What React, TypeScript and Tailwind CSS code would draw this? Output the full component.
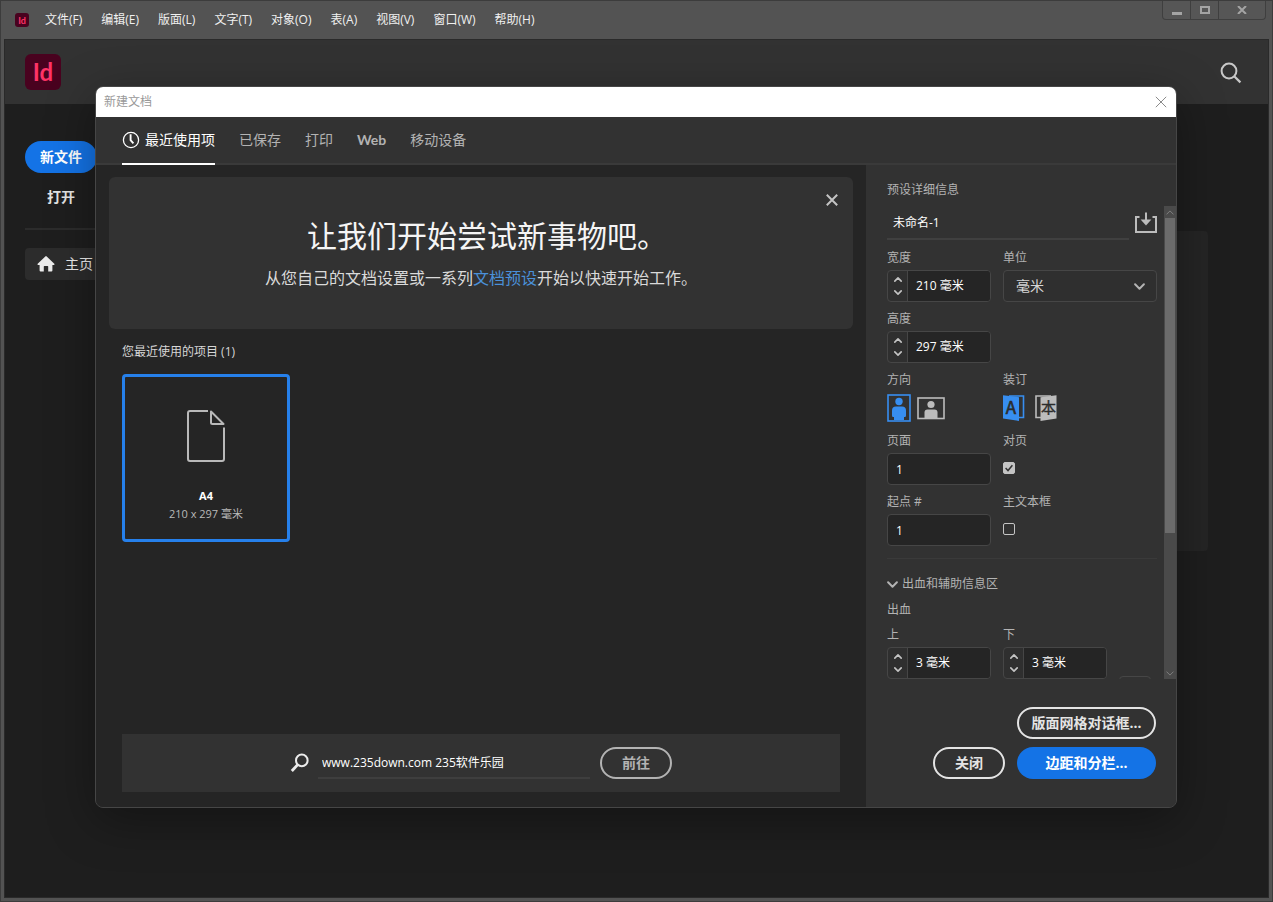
import { useState } from "react";
import type { ReactNode } from "react";

const menus = [
  "文件(F)",
  "编辑(E)",
  "版面(L)",
  "文字(T)",
  "对象(O)",
  "表(A)",
  "视图(V)",
  "窗口(W)",
  "帮助(H)",
];

const tabs = ["最近使用项", "已保存", "打印", "Web", "移动设备"];

const ClockIcon = () => (
  <svg className="h-[18px] w-[18px]" viewBox="0 0 18 18" fill="none" stroke="currentColor">
    <circle cx="9" cy="9" r="7.6" strokeWidth="1.3" />
    <path d="M8.6 3.2V9.2L11.4 12.4" strokeWidth="1.9" />
  </svg>
);

const HomeIcon = () => (
  <svg className="h-4 w-[18px]" viewBox="0 0 18 16" fill="currentColor">
    <path d="M8.3.4a1 1 0 0 1 1.4 0l7.6 7.4c.5.5.2 1.2-.5 1.2H15.4v5.6a1 1 0 0 1-1 1H11.2V10.6a.6.6 0 0 0-.6-.6H7.4a.6.6 0 0 0-.6.6v5H3.6a1 1 0 0 1-1-1V9H1.2C.5 9 .2 8.3.7 7.8z" />
  </svg>
);

const SearchIcon = () => (
  <svg className="h-[22px] w-[22px]" viewBox="0 0 22 22" fill="none" stroke="currentColor" strokeWidth="2">
    <circle cx="9" cy="9" r="7.4" />
    <path d="M14.2 14.2L20.4 20.4" strokeWidth="2.2" />
  </svg>
);

const StockSearchIcon = () => (
  <svg className="h-5 w-5" viewBox="0 0 20 20" fill="none" stroke="currentColor">
    <circle cx="11.8" cy="7.4" r="5.8" strokeWidth="2" />
    <path d="M7.6 11.8L1.8 18" strokeWidth="2.8" />
  </svg>
);

const CloseIcon = ({ className }: { className: string }) => (
  <svg className={className} viewBox="0 0 12 12" stroke="currentColor">
    <path d="M.8.8L11.2 11.2M11.2.8L.8 11.2" />
  </svg>
);

const PageIcon = () => (
  <svg className="h-[54px] w-10" viewBox="0 0 40 54" fill="none" stroke="#b9b9b9" strokeWidth="2" strokeLinejoin="round">
    <path d="M22 2H4a2 2 0 0 0-2 2V50a2 2 0 0 0 2 2H36a2 2 0 0 0 2-2V18.500" />
    <path d="M25 2.500V13.500a1.500 1.500 0 0 0 1.500 1.500H37.500z" />
  </svg>
);

const SaveIcon = () => (
  <svg className="h-[22px] w-[22px]" viewBox="0 0 22 22" fill="none" stroke="currentColor" strokeWidth="2">
    <path d="M4.500 5H1V20H21V5H17.500" />
    <path d="M11 .5V8" />
    <path d="M5.600 7.500H16.400L11 13.400z" fill="currentColor" stroke="none" />
  </svg>
);

const Chevron = ({ className }: { className: string }) => (
  <svg className={className} viewBox="0 0 10 6" fill="none" stroke="currentColor" strokeLinecap="round" strokeLinejoin="round">
    <path d="M1 1L5 5L9 1" />
  </svg>
);

const PortraitIcon = () => (
  <svg className="h-7 w-6" viewBox="0 0 24 28">
    <rect x="1" y="1" width="22" height="26" fill="none" stroke="currentColor" strokeWidth="1.600" />
    <circle cx="12" cy="7.500" r="3.700" fill="currentColor" />
    <path d="M9 12.500h6a4 4 0 0 1 4 4v5a1.500 1.500 0 0 1-2 1.400V26H7v-3.100a1.500 1.500 0 0 1-2-1.400v-5a4 4 0 0 1 4-4z" fill="currentColor" />
  </svg>
);

const LandscapeIcon = () => (
  <svg className="h-6 w-7" viewBox="0 0 28 24">
    <rect x="1" y="2" width="26" height="20.500" fill="none" stroke="currentColor" strokeWidth="1.600" />
    <circle cx="14" cy="8.500" r="3.600" fill="currentColor" />
    <path d="M10.500 13.500h7a3 3 0 0 1 3 3V22H7.500V16.500a3 3 0 0 1 3-3z" fill="currentColor" />
  </svg>
);

const BindLeftIcon = () => (
  <svg className="h-[26px] w-[22px]" viewBox="0 0 22 26">
    <path d="M6 1H20.500V22.500H16" fill="none" stroke="currentColor" strokeWidth="1.600" />
    <path d="M0 .2L16 2.200V26L0 23.400z" fill="currentColor" />
    <text x="8" y="18.500" textAnchor="middle" fontSize="17" fontFamily="Noto Sans CJK SC, sans-serif" fill="#2b2b2b" stroke="#2b2b2b" strokeWidth=".6">
      A
    </text>
  </svg>
);

const BindRightIcon = () => (
  <svg className="h-[26px] w-[22px]" viewBox="0 0 22 26">
    <path d="M16 1H1V22.500H6" fill="none" stroke="currentColor" strokeWidth="1.600" />
    <path d="M21.500 .2L5.500 2.200V26L21.500 23.400z" fill="currentColor" />
    <text x="13.500" y="18" textAnchor="middle" fontSize="15" fontFamily="Noto Sans CJK SC, sans-serif" fill="#2b2b2b" stroke="#2b2b2b" strokeWidth=".4">
      本
    </text>
  </svg>
);

interface FieldProps {
  id: string;
  label: string;
  children: ReactNode;
}

const Field = ({ id, label, children }: FieldProps) => (
  <div className="flex flex-col gap-[3px]">
    <label htmlFor={id} className="leading-[18px]">
      {label}
    </label>
    {children}
  </div>
);

interface StepperProps {
  id: string;
  initial: number;
}

const Stepper = ({ id, initial }: StepperProps) => {
  const [value, setValue] = useState(`${initial} 毫米`);

  const step = (delta: number) => {
    const current = parseFloat(value) || 0;
    setValue(`${Math.max(0, current + delta)} 毫米`);
  };

  return (
    <div className="flex h-8 overflow-hidden rounded border border-[#464646] bg-[#2f2f2f]">
      <div className="flex w-5 shrink-0 flex-col border-r border-[#464646] text-[#c4c4c4]">
        <button type="button" aria-label="增加" className="flex flex-1 items-center justify-center pt-0.5" onClick={() => step(1)}>
          <Chevron className="h-[5px] w-2 rotate-180 stroke-[2]" />
        </button>
        <button type="button" aria-label="减少" className="flex flex-1 items-center justify-center pb-0.5" onClick={() => step(-1)}>
          <Chevron className="h-[5px] w-2 stroke-[2]" />
        </button>
      </div>
      <input
        id={id}
        className="w-full min-w-0 bg-[#252525] px-2 text-xs text-white outline-none"
        value={value}
        onChange={(e) => setValue(e.target.value)}
      />
    </div>
  );
};

const NumberBox = ({ id }: { id: string }) => (
  <input
    id={id}
    defaultValue="1"
    className="h-8 w-full rounded border border-[#464646] bg-[#252525] px-2 text-xs text-white outline-none"
  />
);

interface CheckProps {
  id: string;
  defaultChecked?: boolean;
}

const Check = ({ id, defaultChecked }: CheckProps) => (
  <div className="flex h-[30px] items-center">
    <div className="grid h-3 w-3 place-items-center">
      <input
        id={id}
        type="checkbox"
        defaultChecked={defaultChecked}
        className="peer col-start-1 row-start-1 h-3 w-3 appearance-none rounded-[2px] border border-[#c4c4c4] checked:bg-[#c4c4c4]"
      />
      <svg
        className="pointer-events-none col-start-1 row-start-1 hidden h-2 w-2 peer-checked:block"
        viewBox="0 0 8 8"
        fill="none"
        stroke="#323232"
        strokeWidth="1.500"
      >
        <path d="M.6 4L3 6.500L7.400 1.200" />
      </svg>
    </div>
  </div>
);

interface IconRadioProps {
  name: string;
  label: string;
  checked: boolean;
  onChange: () => void;
  children: ReactNode;
}

const IconRadio = ({ name, label, checked, onChange, children }: IconRadioProps) => (
  <label className={checked ? "relative cursor-pointer text-[#378ef0]" : "relative cursor-pointer text-[#bcbcbc]"}>
    <input type="radio" name={name} aria-label={label} className="sr-only" checked={checked} onChange={onChange} />
    {children}
  </label>
);

const TitleBar = () => (
  <div className="flex h-[38px] items-start">
    <div className="flex h-[38px] items-center pl-3.5">
      <div className="flex h-3.5 w-3.5 items-center justify-center rounded-[3px] bg-[#49021f] font-['Lato'] text-[9px] leading-none font-bold text-[#ff3366]">
        Id
      </div>
      <nav className="ml-4 flex gap-[19px] text-xs text-[#f0f0f0]">
        {menus.map((item) => (
          <button key={item} type="button" className="leading-5 whitespace-nowrap">
            {item}
          </button>
        ))}
      </nav>
    </div>
    <div className="mr-1.5 ml-auto flex h-[19px] rounded-b border border-t-0 border-[#3f3f3f] bg-[#565656] text-[#a4a4a4]">
      <button type="button" aria-label="最小化" className="flex w-7 items-center justify-center border-r border-[#3f3f3f]">
        <svg className="h-[9px] w-2.5" viewBox="0 0 10 9">
          <path d="M0 6H10V9H0z" fill="currentColor" />
        </svg>
      </button>
      <button type="button" aria-label="最大化" className="flex w-7 items-center justify-center border-r border-[#3f3f3f]">
        <svg className="h-2 w-2.5" viewBox="0 0 10 8" fill="none" stroke="currentColor" strokeWidth="2">
          <rect x="1" y="1" width="8" height="6" />
        </svg>
      </button>
      <button type="button" aria-label="退出" className="flex w-[46px] items-center justify-center">
        <svg className="h-2 w-2.5" viewBox="0 0 10 8" stroke="currentColor" strokeWidth="2">
          <path d="M1 0L9 8M9 0L1 8" />
        </svg>
      </button>
    </div>
  </div>
);

const HomeScreen = () => (
  <div className="flex flex-1 flex-col border border-[#2a2a2a] bg-[#1e1e1e]">
    <header className="flex h-16 items-center justify-between bg-[#323232] pr-[26px] pl-5">
      <div className="flex h-9 w-9 items-center justify-center rounded-md bg-[#49021f] font-['Lato'] text-2xl leading-none font-bold text-[#ff3366]">
        Id
      </div>
      <button type="button" aria-label="搜索" className="pt-0.5 text-[#c8c8c8]">
        <SearchIcon />
      </button>
    </header>
    <div className="flex flex-1">
      <aside className="flex w-44 flex-col items-start pt-[37px] pl-5">
        <button type="button" className="h-8 w-[72px] rounded-full bg-[#1473e6] text-sm font-bold text-white">
          新文件
        </button>
        <button type="button" className="mt-2 h-8 w-[72px] text-sm font-bold text-[#e4e4e4]">
          打开
        </button>
        <hr className="mt-[15px] w-full border-t-2 border-[#2c2c2c]" />
        <a href="#home" className="mt-[18px] flex h-8 w-full items-center gap-2.5 rounded bg-[#2c2c2c] pl-3 text-sm text-[#ececec]">
          <HomeIcon />
          主页
        </a>
      </aside>
      <main className="flex-1 pt-[127px] pr-[60px] pl-8">
        <div className="h-80 rounded bg-[#252525]" />
      </main>
    </div>
  </div>
);

const RecentPanel = () => {
  const [showBanner, setShowBanner] = useState(true);

  return (
    <section className="flex flex-1 flex-col bg-[#252525] pb-[15px]">
      {showBanner && (
        <div className="relative mx-[13px] mt-3 h-[152px] rounded-md bg-[#323232] pt-9 text-center">
          <button
            type="button"
            aria-label="关闭提示"
            className="absolute top-[17px] right-[15px] text-[#c4c4c4]"
            onClick={() => setShowBanner(false)}
          >
            <CloseIcon className="h-3 w-3 stroke-2" />
          </button>
          <h2 className="pl-3 text-3xl leading-[46px] font-normal text-[#f5f5f5]">让我们开始尝试新事物吧。</h2>
          <p className="mt-[7px] text-base leading-6 text-[#dadada]">
            从您自己的文档设置或一系列
            <a href="#presets" className="text-[#4a90d9]">
              文档预设
            </a>
            开始以快速开始工作。
          </p>
        </div>
      )}
      <div className="mx-[26px] mt-[13px]">
        <h3 className="text-xs leading-5 text-[#d6d6d6]">您最近使用的项目 (1)</h3>
        <button
          type="button"
          className="mt-3 flex h-[168px] w-[168px] flex-col items-center rounded border-[3px] border-[#2680eb] pt-8"
        >
          <PageIcon />
          <span className="mt-6 text-[11px] leading-[18px] font-bold text-white">A4</span>
          <span className="text-[11px] leading-[18px] text-[#b9b9b9]">210 x 297 毫米</span>
        </button>
      </div>
      <form className="mx-[26px] mt-auto flex h-[58px] items-center justify-center bg-[#323232]" onSubmit={(e) => e.preventDefault()}>
        <label htmlFor="stock" aria-label="搜索模板" className="text-[#ececec]">
          <StockSearchIcon />
        </label>
        <input
          id="stock"
          defaultValue="www.235down.com 235软件乐园"
          className="ml-2 h-8 w-[272px] border-b-2 border-[#3e3e3e] bg-transparent px-1 text-xs text-white outline-none"
        />
        <button type="submit" className="ml-2.5 h-8 w-[72px] rounded-full border-2 border-[#b3b3b3] text-sm font-bold text-[#b3b3b3]">
          前往
        </button>
      </form>
    </section>
  );
};

const DetailsPanel = () => {
  const [orientation, setOrientation] = useState("portrait");
  const [binding, setBinding] = useState("left");

  return (
    <aside className="flex w-[310px] shrink-0 flex-col bg-[#323232] pt-[15px] text-xs text-[#b3b3b3]">
      <h3 className="h-[26px] pl-[21px] leading-5">预设详细信息</h3>
      <div className="flex h-[473px] overflow-hidden pl-[21px]">
        <div className="mr-[7px] flex-1">
          <div className="flex h-[34px] items-center">
            <input
              aria-label="文档名称"
              defaultValue="未命名-1"
              className="h-full min-w-0 flex-1 border-b-2 border-[#404040] bg-transparent px-1.5 text-white outline-none"
            />
            <button type="button" aria-label="存储预设" className="ml-1.5 text-[#bcbcbc]">
              <SaveIcon />
            </button>
          </div>

          <div className="mt-[9px] grid grid-cols-[104px_1fr] gap-x-3 gap-y-2">
            <Field id="width" label="宽度">
              <Stepper id="width" initial={210} />
            </Field>
            <Field id="unit" label="单位">
              <div className="relative">
                <select
                  id="unit"
                  className="h-8 w-full appearance-none rounded border border-[#464646] bg-[#2f2f2f] px-3 text-sm text-[#d6d6d6] outline-none"
                >
                  <option>毫米</option>
                  <option>厘米</option>
                  <option>点</option>
                </select>
                <Chevron className="pointer-events-none absolute top-[13px] right-3 h-[7px] w-[11px] stroke-[1.8]" />
              </div>
            </Field>

            <div className="col-span-2 w-[104px]">
              <Field id="height" label="高度">
                <Stepper id="height" initial={297} />
              </Field>
            </div>

            <fieldset>
              <legend className="leading-[18px]">方向</legend>
              <div className="mt-[3px] flex h-8 items-center gap-1.5">
                <IconRadio name="orientation" label="纵向" checked={orientation === "portrait"} onChange={() => setOrientation("portrait")}>
                  <PortraitIcon />
                </IconRadio>
                <IconRadio name="orientation" label="横向" checked={orientation === "landscape"} onChange={() => setOrientation("landscape")}>
                  <LandscapeIcon />
                </IconRadio>
              </div>
            </fieldset>
            <fieldset>
              <legend className="leading-[18px]">装订</legend>
              <div className="mt-[3px] flex h-8 items-center gap-2.5">
                <IconRadio name="binding" label="从左到右" checked={binding === "left"} onChange={() => setBinding("left")}>
                  <BindLeftIcon />
                </IconRadio>
                <IconRadio name="binding" label="从右到左" checked={binding === "right"} onChange={() => setBinding("right")}>
                  <BindRightIcon />
                </IconRadio>
              </div>
            </fieldset>

            <Field id="pages" label="页面">
              <NumberBox id="pages" />
            </Field>
            <Field id="facing" label="对页">
              <Check id="facing" defaultChecked />
            </Field>

            <Field id="start" label="起点 #">
              <NumberBox id="start" />
            </Field>
            <Field id="frame" label="主文本框">
              <Check id="frame" />
            </Field>
          </div>

          <hr className="mt-3 border-[#3a3a3a]" />

          <button type="button" className="mt-4 flex items-center gap-1 leading-[18px]">
            <Chevron className="h-[7px] w-[11px] stroke-[1.8]" />
            出血和辅助信息区
          </button>
          <p className="mt-2 leading-[18px]">出血</p>
          <div className="mt-[7px] grid grid-cols-[104px_104px_32px] items-start gap-x-3">
            <Field id="bleed-top" label="上">
              <Stepper id="bleed-top" initial={3} />
            </Field>
            <Field id="bleed-bottom" label="下">
              <Stepper id="bleed-bottom" initial={3} />
            </Field>
            <button type="button" aria-label="链接设置" className="mt-[50px] h-8 rounded border border-[#464646]" />
          </div>
        </div>

        <div className="flex w-3 flex-col bg-[#4a4a4a] text-[#8c8c8c]">
          <button type="button" aria-label="向上滚动" className="flex h-3 items-center justify-center">
            <Chevron className="h-[5px] w-2 rotate-180" />
          </button>
          <div className="mx-px h-[315px] bg-[#6b6b6b]" />
          <button type="button" aria-label="向下滚动" className="mt-auto flex h-3 items-center justify-center">
            <Chevron className="h-[5px] w-2" />
          </button>
        </div>
      </div>

      <div className="mt-auto flex flex-col items-end gap-2 pr-5 pb-7 text-sm font-bold">
        <button type="button" className="h-8 w-[139px] rounded-full border-2 border-[#e4e4e4] text-[#e4e4e4]">
          版面网格对话框...
        </button>
        <div className="flex gap-3">
          <button type="button" className="h-8 w-[72px] rounded-full border-2 border-[#e4e4e4] text-[#e4e4e4]">
            关闭
          </button>
          <button type="button" className="h-8 w-[139px] rounded-full bg-[#1473e6] text-white">
            边距和分栏...
          </button>
        </div>
      </div>
    </aside>
  );
};

const NewDocumentDialog = () => {
  const [activeTab, setActiveTab] = useState(tabs[0]);

  return (
    <div
      role="dialog"
      aria-label="新建文档"
      className="absolute top-[85px] right-[95px] left-[94px] flex min-h-[722px] flex-col overflow-hidden rounded-lg border border-[#464646] bg-[#323232] shadow-[0_12px_48px_rgba(0,0,0,0.35)]"
    >
      <div className="flex h-[30px] items-center justify-between bg-white pr-[9px] pl-2">
        <span className="text-xs text-[#999999]">新建文档</span>
        <button type="button" aria-label="关闭对话框" className="text-[#8a8a8a]">
          <CloseIcon className="h-3 w-3" />
        </button>
      </div>
      <div className="flex h-12 gap-6 border-b-2 border-[#3a3a3a] pl-[26px] text-sm">
        {tabs.map((tab) => (
          <button
            key={tab}
            type="button"
            onClick={() => setActiveTab(tab)}
            className={
              tab === activeTab
                ? "flex h-12 items-center gap-[5px] border-b-2 border-white text-white"
                : "flex h-12 items-center border-b-2 border-transparent text-[#b3b3b3]"
            }
          >
            {tab === tabs[0] && <ClockIcon />}
            {tab === "Web" ? <span className="font-['Lato'] font-bold">{tab}</span> : tab}
          </button>
        ))}
      </div>
      <div className="flex flex-1">
        <RecentPanel />
        <DetailsPanel />
      </div>
    </div>
  );
};

const App = () => {
  return (
    <div className="relative flex min-h-screen flex-col border border-[#3c3c3c] bg-[#535353] font-['Open_Sans','Noto_Sans_CJK_SC',sans-serif]">
      <TitleBar />
      <div className="flex flex-1 flex-col px-[3px] pb-[3px]">
        <HomeScreen />
      </div>
      <NewDocumentDialog />
    </div>
  );
};

export default App;
